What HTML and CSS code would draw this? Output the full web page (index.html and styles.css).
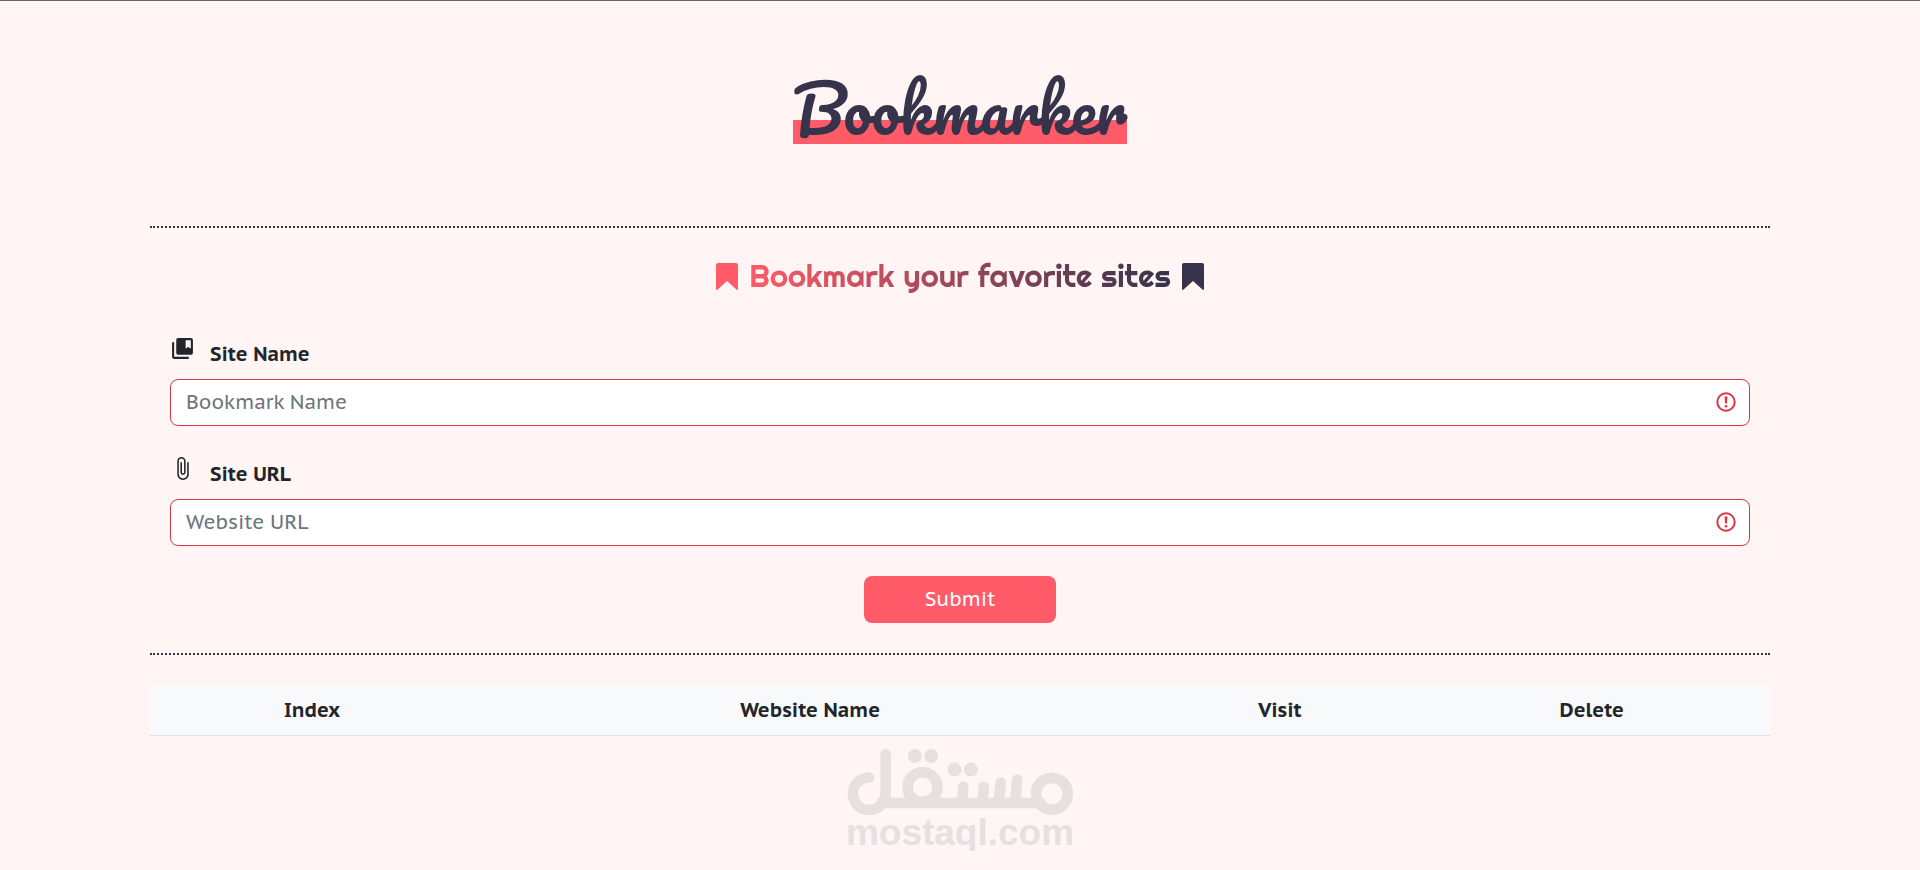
FILE: index.html
```html
<!DOCTYPE html>
<html lang="en">
<head>
    <meta charset="UTF-8">
    <meta name="viewport" content="width=device-width, initial-scale=1.0">
    <title>Bookmarker</title>
    <link rel="stylesheet" href="styles.css">
</head>
<body>
    <div class="container">
        <header>
            <h1>Bookmarker</h1>
        </header>

        <main>
            <form class="bookmark-form" novalidate>
                <h2>
                    <svg class="flag flag-start" viewBox="0 0 22 27" aria-hidden="true"><path d="M2 0h18q2 0 2 2v24q0 1-1 1L11 18 1 27q-1 0-1-1V2q0-2 2-2z"/></svg>
                    <span>Bookmark your favorite sites</span>
                    <svg class="flag flag-end" viewBox="0 0 22 27" aria-hidden="true"><path d="M2 0h18q2 0 2 2v24q0 1-1 1L11 18 1 27q-1 0-1-1V2q0-2 2-2z"/></svg>
                </h2>

                <div class="field">
                    <label for="siteName">
                        <svg class="label-icon" viewBox="0 0 24 24" aria-hidden="true"><path d="M4 6H2v14c0 1.100.9 2 2 2h14v-2H4V6zm16-4H8c-1.100 0-2 .9-2 2v12c0 1.100.9 2 2 2h12c1.100 0 2-.9 2-2V4c0-1.100-.9-2-2-2zm0 10-2.500-1.500L15 12V4h5v8z"/></svg>
                        Site Name
                    </label>
                    <div class="control">
                        <input type="text" id="siteName" placeholder="Bookmark Name">
                        <svg class="error-icon" viewBox="0 0 20 20" aria-hidden="true"><circle cx="10" cy="10" r="8.700"/><path d="M8.500 4.500h3l-.6 7H9.100z"/><circle class="dot" cx="10" cy="14.300" r="1.300"/></svg>
                    </div>
                </div>

                <div class="field">
                    <label for="siteUrl">
                        <svg class="label-icon" viewBox="0 0 24 24" aria-hidden="true"><path d="M16.500 6v11.500c0 2.210-1.790 4-4 4s-4-1.790-4-4V5c0-1.380 1.120-2.500 2.500-2.500s2.500 1.120 2.500 2.500v10.500c0 .55-.45 1-1 1s-1-.45-1-1V6H10v9.500c0 1.380 1.120 2.500 2.500 2.500s2.500-1.120 2.500-2.500V5c0-2.210-1.790-4-4-4S7 2.790 7 5v12.500c0 3.040 2.460 5.500 5.500 5.500s5.500-2.460 5.500-5.500V6h-1.500z"/></svg>
                        Site URL
                    </label>
                    <div class="control">
                        <input type="url" id="siteUrl" placeholder="Website URL">
                        <svg class="error-icon" viewBox="0 0 20 20" aria-hidden="true"><circle cx="10" cy="10" r="8.700"/><path d="M8.500 4.500h3l-.6 7H9.100z"/><circle class="dot" cx="10" cy="14.300" r="1.300"/></svg>
                    </div>
                </div>

                <button type="submit" class="submit-btn">Submit</button>
            </form>

            <table>
                <thead>
                    <tr>
                        <th class="col-index">Index</th>
                        <th class="col-name">Website Name</th>
                        <th class="col-visit">Visit</th>
                        <th class="col-delete">Delete</th>
                    </tr>
                </thead>
                <tbody></tbody>
            </table>
        </main>

        <footer>
            <svg class="logo" viewBox="48 57 681 199" role="img" aria-label="مستقل">
                <g class="logo-strokes">
                    <path d="M113 143a49 49 0 1 0 49 49"/>
                    <path d="M163 73V205L150 220H630"/>
                    <circle cx="274" cy="172" r="45"/>
                    <circle cx="664" cy="192" r="48"/>
                    <path d="M397 171l-5 44M459 171l-4 44M510 158l-6 57M560 150l-7 65"/>
                </g>
                <circle cx="251" cy="78" r="21"/>
                <circle cx="300" cy="78" r="21"/>
                <circle cx="371" cy="119" r="21"/>
                <circle cx="420" cy="119" r="21"/>
            </svg>
            <p>mostaql.com</p>
        </footer>
    </div>
</body>
</html>
```
FILE: styles.css
```css
* {
    margin: 0;
    padding: 0;
    box-sizing: border-box;
}

body {
    font-family: "PT Sans Caption", "Noto Sans", sans-serif;
    font-size: 20px;
    line-height: 30px;
    color: #212529;
    background: #fff5f4;
    border-top: 1px solid #6b6567;
}

.container {
    width: 84.375%;
    margin: 0 auto;
}

header {
    padding: 63px 0 82px;
    text-align: center;
}

h1 {
    display: inline-block;
    padding-top: 10px;
    font-family: "Pacifico", "Lato", cursive;
    font-size: 63px;
    font-weight: 400;
    line-height: 70px;
    color: #36334a;
    background: linear-gradient(#ff5b69, #ff5b69) bottom / 100% 24px no-repeat;
    vertical-align: top;
}

.bookmark-form {
    padding: 28px 20px 30px;
    border-top: 2px dotted #36334a;
    border-bottom: 2px dotted #36334a;
}

h2 {
    display: flex;
    justify-content: center;
    align-items: center;
    gap: 11px;
    margin-bottom: 40px;
    font-family: "Righteous", "Lato", sans-serif;
    font-size: 31px;
    font-weight: 400;
    line-height: 40px;
}

h2 span {
    color: transparent;
    background: linear-gradient(to right, #ff5b69, #36334a);
    -webkit-background-clip: text;
    background-clip: text;
}

.flag {
    width: 22px;
    height: 27px;
}

.flag-start {
    fill: #ff5b69;
}

.flag-end {
    fill: #36334a;
}

.field {
    margin-bottom: 30px;
}

label {
    display: flex;
    gap: 15px;
    margin-bottom: 7px;
    font-weight: 700;
    line-height: 36px;
}

.label-icon {
    width: 25px;
    height: 25px;
    fill: #212529;
}

.control {
    position: relative;
}

input {
    display: block;
    width: 100%;
    height: 47px;
    padding: 0 50px 2px 15px;
    font: inherit;
    color: #212529;
    background: #fff;
    border: 1px solid #dc3545;
    border-radius: 8px;
}

input::placeholder {
    color: #6c757d;
    opacity: 1;
}

/* sits over the right end of the input */
.error-icon {
    position: absolute;
    top: 13px;
    right: 14px;
    width: 20px;
    height: 20px;
    fill: #dc3545;
}

.error-icon circle:not(.dot) {
    fill: none;
    stroke: #dc3545;
    stroke-width: 2;
}

.submit-btn {
    display: block;
    width: 192px;
    height: 47px;
    padding-bottom: 2px;
    margin: 0 auto;
    font: inherit;
    color: #fff;
    background: #ff5b69;
    border: none;
    border-radius: 8px;
    cursor: pointer;
}

table {
    width: 100%;
    margin-top: 30px;
    table-layout: fixed;
    border-collapse: collapse;
}

th {
    padding: 10px;
    font-weight: 700;
    background: #f8f9fa;
    border-bottom: 1px solid #dee2e6;
}

.col-index {
    width: 20%;
}

.col-name {
    width: 41.5%;
}

.col-visit {
    width: 16.5%;
}

.col-delete {
    width: 22%;
}

footer {
    padding-top: 13px;
    text-align: center;
    color: #e6e0e0;
}

.logo {
    display: block;
    width: 227px;
    height: 66px;
    margin: 0 auto;
    fill: #e6e0e0;
}

.logo-strokes {
    fill: none;
    stroke: #e6e0e0;
    stroke-width: 32;
    stroke-linecap: round;
    stroke-linejoin: round;
}

footer p {
    font-family: "Liberation Sans", Arial, sans-serif;
    font-size: 37px;
    font-weight: 700;
    line-height: 36px;
}
```
